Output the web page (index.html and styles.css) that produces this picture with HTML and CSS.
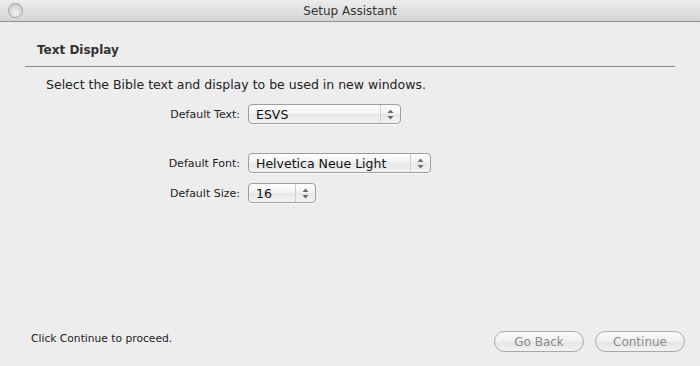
FILE: index.html
```html
<!DOCTYPE html>
<html lang="en">
<head>
    <meta charset="UTF-8">
    <title>Setup Assistant</title>
    <link rel="stylesheet" href="styles.css">
</head>
<body>
<div class="window">
    <div class="titlebar">
        <div class="lights"><span class="light"></span></div>
        <div class="title">Setup Assistant</div>
        <div></div>
    </div>

    <div class="content">
        <h2 class="section-title">Text Display</h2>
        <p class="intro">Select the Bible text and display to be used in new windows.</p>

        <div class="form">
            <div class="row">
                <label class="label">Default Text:</label>
                <div class="popup popup-text">
                    <span class="value">ESVS</span>
                    <span class="arrows"><svg width="7" height="11" viewBox="0 0 7 11"><path d="M3.5 0.5 L6.5 4 L0.5 4 Z M0.5 7 L6.5 7 L3.5 10.5 Z" fill="#6a6a6a"/></svg></span>
                </div>
            </div>
            <div class="row row-gap">
                <label class="label">Default Font:</label>
                <div class="popup popup-font">
                    <span class="value">Helvetica Neue Light</span>
                    <span class="arrows"><svg width="7" height="11" viewBox="0 0 7 11"><path d="M3.5 0.5 L6.5 4 L0.5 4 Z M0.5 7 L6.5 7 L3.5 10.5 Z" fill="#6a6a6a"/></svg></span>
                </div>
            </div>
            <div class="row">
                <label class="label">Default Size:</label>
                <div class="popup popup-size">
                    <span class="value">16</span>
                    <span class="arrows"><svg width="7" height="11" viewBox="0 0 7 11"><path d="M3.5 0.5 L6.5 4 L0.5 4 Z M0.5 7 L6.5 7 L3.5 10.5 Z" fill="#6a6a6a"/></svg></span>
                </div>
            </div>
        </div>
    </div>

    <div class="footer">
        <span class="hint">Click Continue to proceed.</span>
        <div class="buttons">
            <button class="btn">Go Back</button>
            <button class="btn">Continue</button>
        </div>
    </div>
</div>
</body>
</html>
```

FILE: styles.css
```css
body {
    margin: 0;
    font-family: 'DejaVu Sans', sans-serif;
    background: #ececec;
    color: #222;
}

.window {
    width: 700px;
    height: 366px;
    display: flex;
    flex-direction: column;
    background: #ededed;
}

.titlebar {
    height: 21px;
    display: grid;
    grid-template-columns: 1fr auto 1fr;
    align-items: center;
    background: linear-gradient(to bottom, #ececec, #d5d5d5);
    border-bottom: 1px solid #8f8f8f;
}

.lights {
    padding-left: 8px;
    display: flex;
}

.light {
    width: 13px;
    height: 13px;
    border-radius: 50%;
    border: 1px solid #a2a2a2;
    background: radial-gradient(circle at 50% 70%, #f4f4f4, #d0d0d0 70%, #bdbdbd);
}

.title {
    font-size: 12px;
    color: #333;
    padding-top: 1px;
}

.content {
    flex: 1;
    padding: 0 25px;
}

.section-title {
    margin: 0;
    padding: 21px 0 0 12px;
    height: 23px;
    font-size: 12px;
    font-weight: bold;
    color: #333;
    border-bottom: 1px solid #8a8a8a;
}

.intro {
    margin: 0;
    padding: 10px 0 0 21px;
    font-size: 12.5px;
    color: #222;
}

.form {
    display: flex;
    flex-direction: column;
    gap: 10px;
    padding-top: 12px;
}

.row {
    display: flex;
    align-items: center;
    gap: 8px;
}

.row-gap {
    margin-top: 19px;
}

.label {
    width: 215px;
    text-align: right;
    font-size: 11px;
    color: #222;
}

.popup {
    height: 18px;
    display: flex;
    align-items: center;
    border: 1px solid #9e9e9e;
    border-radius: 4px;
    background: linear-gradient(to bottom, #ffffff, #f1f1f1 50%, #e6e6e6 51%, #f4f4f4);
    box-shadow: 0 1px 0 rgba(255, 255, 255, 0.7);
}

.popup .value {
    flex: 1;
    padding-left: 7px;
    font-size: 12.5px;
    color: #111;
}

.arrows {
    width: 19px;
    height: 100%;
    display: flex;
    align-items: center;
    justify-content: center;
    border-left: 1px solid #cfcfcf;
}

.popup-text { width: 151px; }
.popup-font { width: 181px; }
.popup-size { width: 66px; }

.footer {
    height: 46px;
    display: flex;
    justify-content: space-between;
    align-items: flex-start;
    padding: 0 15px 0 31px;
}

.hint {
    font-size: 10.7px;
    color: #222;
    padding-top: 12px;
}

.buttons {
    display: flex;
    gap: 11px;
    padding-top: 11px;
}

.btn {
    width: 90px;
    height: 21px;
    border: 1px solid #a8a8a8;
    border-radius: 11px;
    background: linear-gradient(to bottom, #fbfbfb, #efefef 50%, #e4e4e4 51%, #f2f2f2);
    font-family: 'DejaVu Sans', sans-serif;
    font-size: 12px;
    color: #8a8a8a;
    padding: 0;
}
```
